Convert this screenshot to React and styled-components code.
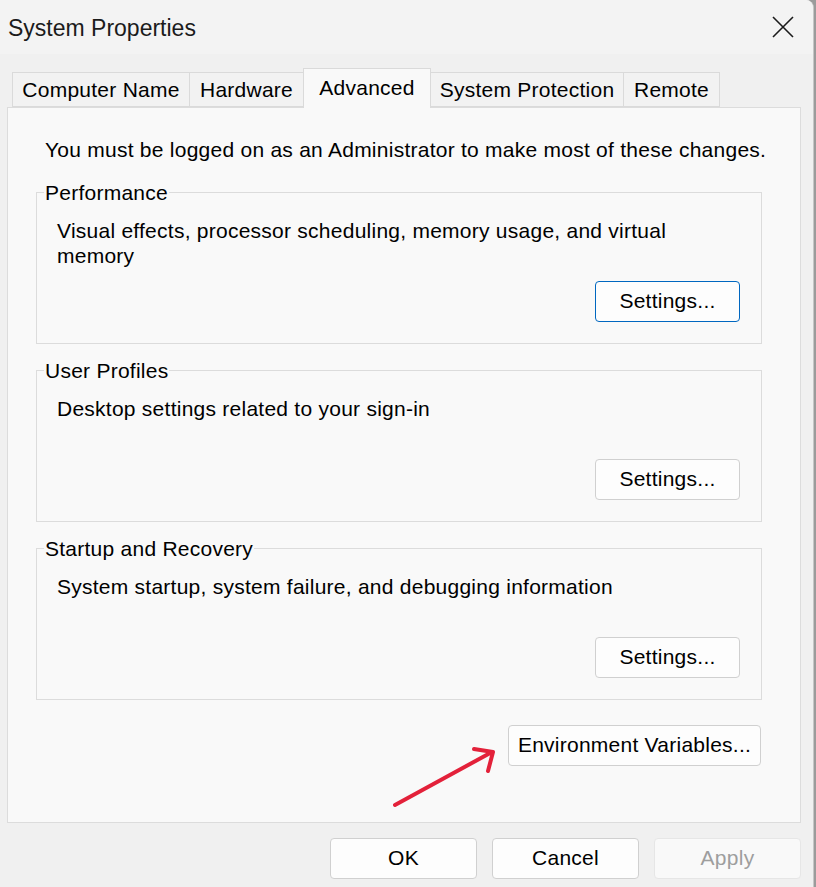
import React from 'react';
import styled, { createGlobalStyle } from 'styled-components';

const GlobalStyle = createGlobalStyle`
  body {
    margin: 0;
    background: #9b9b9b;
    font-family: "Liberation Sans", Arial, sans-serif;
  }
`;

const Window = styled.div`
  position: relative;
  width: 813px;
  height: 887px;
  background: #f0f0f0;
  border-right: 1px solid #c6c6c6;
  border-top-right-radius: 8px;
  overflow: hidden;
  color: #000;
  font-size: 21px;
  letter-spacing: 0.25px;
`;

const TitleBar = styled.div`
  display: flex;
  align-items: center;
  justify-content: space-between;
  height: 54px;
  padding: 3px 19px 0 8px;
  box-sizing: border-box;
  background: #f3f3f3;
`;

const Title = styled.span`
  font-size: 23px;
  letter-spacing: 0;
  color: #1b1b1b;
`;

const CloseIcon = styled.svg`
  width: 22px;
  height: 22px;
  margin-bottom: 4px;
`;

const Body = styled.div`
  padding: 14px 0 0 7px;
`;

const TabStrip = styled.div`
  display: flex;
  align-items: flex-end;
  margin-left: 5px;
  height: 39px;
`;

const Tab = styled.div`
  position: relative;
  z-index: ${(p) => (p.$active ? 2 : 1)};
  display: flex;
  align-items: center;
  justify-content: center;
  width: ${(p) => p.$width}px;
  height: ${(p) => (p.$active ? 40 : 35)}px;
  margin-bottom: ${(p) => (p.$active ? -1 : 0)}px;
  padding-bottom: ${(p) => (p.$active ? 2 : 0)}px;
  box-sizing: border-box;
  background: ${(p) => (p.$active ? '#f9f9f9' : '#f2f2f2')};
  border: 1px solid #dadada;
  border-bottom: ${(p) => (p.$active ? 'none' : '1px solid #dadada')};
  margin-right: -1px;
  white-space: nowrap;
`;

const Panel = styled.div`
  position: relative;
  display: flex;
  flex-direction: column;
  width: 794px;
  height: 716px;
  box-sizing: border-box;
  padding: 29px 38px 0 28px;
  background: #f9f9f9;
  border: 1px solid #dcdcdc;
`;

const Intro = styled.p`
  margin: 0 0 18px 9px;
  line-height: 25px;
  white-space: nowrap;
`;

const Group = styled.fieldset`
  display: flex;
  flex-direction: column;
  margin: 0 0 14px;
  padding: 0 21px 21px 20px;
  border: 1px solid #dcdcdc;
  min-width: 0;
`;

const Legend = styled.legend`
  margin-left: -13px;
  padding: 0 1px;
  line-height: 25px;
`;

const Description = styled.p`
  margin: 13px 0 0;
  min-height: 50px;
  line-height: 25px;
`;

const Button = styled.button`
  display: flex;
  align-items: center;
  justify-content: center;
  align-self: flex-end;
  width: ${(p) => p.$width || 145}px;
  height: 41px;
  margin-top: 13px;
  padding: 0 0 1px;
  box-sizing: border-box;
  font-family: inherit;
  font-size: 21px;
  letter-spacing: 0.25px;
  color: ${(p) => (p.disabled ? '#9e9e9e' : '#000')};
  background: ${(p) => (p.disabled ? '#f9f9f9' : '#fdfdfd')};
  border: 1px solid
    ${(p) => (p.$focused ? '#0067c0' : p.disabled ? '#e6e6e6' : '#d0d0d0')};
  border-radius: 4px;
`;

const EnvButton = styled(Button)`
  margin: 11px 1px 0 0;
`;

const Footer = styled.div`
  display: flex;
  justify-content: flex-end;
  gap: 15px;
  width: 794px;
  padding-top: 15px;

  ${Button} {
    margin-top: 0;
  }
`;

const Arrow = styled.svg`
  position: absolute;
  left: 0;
  top: 0;
  width: 816px;
  height: 887px;
  pointer-events: none;
  z-index: 5;
`;

const tabs = [
  { label: 'Computer Name', width: 178 },
  { label: 'Hardware', width: 115 },
  { label: 'Advanced', width: 128, active: true },
  { label: 'System Protection', width: 194 },
  { label: 'Remote', width: 97 },
];

const groups = [
  {
    title: 'Performance',
    text: 'Visual effects, processor scheduling, memory usage, and virtual memory',
    focused: true,
  },
  { title: 'User Profiles', text: 'Desktop settings related to your sign-in' },
  {
    title: 'Startup and Recovery',
    text: 'System startup, system failure, and debugging information',
  },
];

export default function App() {
  return (
    <>
      <GlobalStyle />
      <Window>
        <TitleBar>
          <Title>System Properties</Title>
          <CloseIcon viewBox="0 0 22 22">
            <path
              d="M1 1 L21 21 M21 1 L1 21"
              stroke="#1b1b1b"
              strokeWidth="1.6"
              fill="none"
            />
          </CloseIcon>
        </TitleBar>
        <Body>
          <TabStrip>
            {tabs.map((t) => (
              <Tab key={t.label} $width={t.width} $active={t.active}>
                {t.label}
              </Tab>
            ))}
          </TabStrip>
          <Panel>
            <Intro>
              You must be logged on as an Administrator to make most of these changes.
            </Intro>
            {groups.map((g) => (
              <Group key={g.title}>
                <Legend>{g.title}</Legend>
                <Description>{g.text}</Description>
                <Button $focused={g.focused}>Settings...</Button>
              </Group>
            ))}
            <EnvButton $width={253}>Environment Variables...</EnvButton>
          </Panel>
          <Footer>
            <Button $width={147}>OK</Button>
            <Button $width={147}>Cancel</Button>
            <Button $width={147} disabled>
              Apply
            </Button>
          </Footer>
        </Body>
        <Arrow viewBox="0 0 816 887">
          <g
            stroke="#e3213a"
            strokeWidth="4"
            strokeLinecap="round"
            strokeLinejoin="round"
            fill="none"
          >
            <path d="M395 805 L492 752" />
            <path d="M474 749 L493 752 L488 771" />
          </g>
        </Arrow>
      </Window>
    </>
  );
}
